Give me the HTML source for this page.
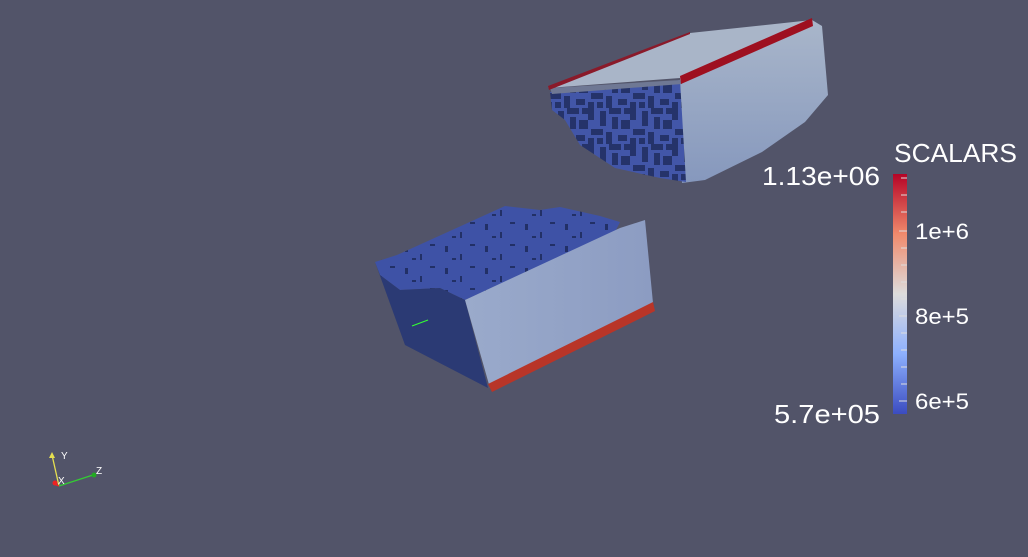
<!DOCTYPE html>
<html><head><meta charset="utf-8"><style>
html,body{margin:0;padding:0;background:#525469;width:1028px;height:557px;overflow:hidden}
svg{display:block}
text{font-family:"Liberation Sans",sans-serif;fill:#fff}
</style></head><body>
<svg width="1028" height="557" viewBox="0 0 1028 557">
<defs>
<linearGradient id="cb" x1="0" y1="0" x2="0" y2="1">
<stop offset="0" stop-color="#b40426"/><stop offset="0.25" stop-color="#f08a6c"/>
<stop offset="0.5" stop-color="#dddcdc"/><stop offset="0.75" stop-color="#8db0fe"/>
<stop offset="1" stop-color="#3b4cc0"/></linearGradient>
<linearGradient id="rf" x1="0" y1="0" x2="0" y2="1">
<stop offset="0" stop-color="#a9b6ca"/><stop offset="1" stop-color="#8698bd"/></linearGradient>
<linearGradient id="ff" x1="0" y1="0" x2="1" y2="0">
<stop offset="0" stop-color="#9aaacb"/><stop offset="1" stop-color="#8c9cc2"/></linearGradient>
<pattern id="nz" width="42" height="36" patternUnits="userSpaceOnUse">
<rect width="42" height="36" fill="#4256a8"/>
<rect x="0" y="0" width="6" height="12" fill="#25336a"/>
<rect x="12" y="3" width="6" height="15" fill="#25336a"/>
<rect x="21" y="0" width="12" height="6" fill="#25336a"/>
<rect x="24" y="9" width="6" height="12" fill="#25336a"/>
<rect x="33" y="12" width="9" height="9" fill="#25336a"/>
<rect x="3" y="21" width="12" height="6" fill="#25336a"/>
<rect x="0" y="30" width="6" height="6" fill="#25336a"/>
<rect x="18" y="24" width="6" height="12" fill="#25336a"/>
<rect x="30" y="27" width="9" height="6" fill="#25336a"/>
<rect x="36" y="0" width="6" height="6" fill="#25336a"/>
<rect x="9" y="30" width="6" height="6" fill="#25336a"/>
</pattern>
<pattern id="nz2" width="40" height="22" patternUnits="userSpaceOnUse">
<rect width="40" height="22" fill="#3e52a6"/>
<rect x="5" y="4" width="3" height="6" fill="#223066"/>
<rect x="20" y="12" width="2" height="6" fill="#223066"/>
<rect x="30" y="2" width="5" height="2" fill="#223066"/>
<rect x="12" y="16" width="4" height="2" fill="#223066"/>
</pattern>
</defs>

<!-- top object -->
<polygon points="548,88 690,33 812,20 680,78" fill="#a9b5c8"/>
<polygon points="680,78 812,20 822,26 828,95 805,122 762,152 705,180 682,183" fill="url(#rf)"/>
<polygon points="550,92 680,80 686,182 660,178 615,168 580,145 565,120 552,110" fill="url(#nz)"/>
<polygon points="550,88 680,80 682,84 552,94" fill="#6f7894"/>
<polygon points="680,76 812,18 813,26 681,84" fill="#9e1020"/>
<polygon points="548,86 690,32 690,34 549,90" fill="#8a1a2a"/>

<!-- bottom object -->
<polygon points="375,262 397,255 505,206 540,210 560,207 600,216 620,222 615,232 465,300 440,288 400,290 380,275" fill="url(#nz2)"/>
<polygon points="375,262 380,275 400,290 440,288 465,300 488,388 405,345" fill="#2b3a74"/>
<polygon points="465,300 620,228 645,220 653,303 490,388" fill="url(#ff)"/>
<polygon points="488,384 653,302 655,311 492,392" fill="#b83528"/>
<line x1="412" y1="326" x2="428" y2="320" stroke="#3f3" stroke-width="1.2"/>

<!-- axes -->
<line x1="59" y1="486" x2="52" y2="455" stroke="#e6e050" stroke-width="1.3"/>
<polygon points="49,458 55,458 52,452" fill="#e6e050"/>
<line x1="59" y1="486" x2="93" y2="475" stroke="#3c3" stroke-width="1.3"/>
<circle cx="94" cy="475" r="2.5" fill="#2a2"/>
<line x1="59" y1="486" x2="54" y2="484" stroke="#e22" stroke-width="1.3"/>
<circle cx="55" cy="483" r="2.5" fill="#e22"/>
<text x="61" y="459" font-size="10">Y</text>
<text x="96" y="474" font-size="10">Z</text>
<text x="58" y="484" font-size="10">X</text>

<!-- colorbar -->
<rect x="893" y="174" width="14" height="240" fill="url(#cb)"/>
<g stroke="#ddd" stroke-width="1">
<line x1="901" y1="178" x2="907" y2="178"/><line x1="901" y1="195" x2="907" y2="195"/>
<line x1="901" y1="212" x2="907" y2="212"/><line x1="899" y1="231" x2="907" y2="231"/>
<line x1="901" y1="248" x2="907" y2="248"/><line x1="901" y1="265" x2="907" y2="265"/>
<line x1="901" y1="282" x2="907" y2="282"/><line x1="901" y1="299" x2="907" y2="299"/>
<line x1="899" y1="316" x2="907" y2="316"/><line x1="901" y1="333" x2="907" y2="333"/>
<line x1="901" y1="350" x2="907" y2="350"/><line x1="901" y1="367" x2="907" y2="367"/>
<line x1="901" y1="384" x2="907" y2="384"/><line x1="899" y1="401" x2="907" y2="401"/>
</g>
<text x="894" y="162" font-size="26" textLength="123" lengthAdjust="spacingAndGlyphs">SCALARS</text>
<text x="762" y="185" font-size="26" textLength="118" lengthAdjust="spacingAndGlyphs">1.13e+06</text>
<text x="774" y="423" font-size="26" textLength="106" lengthAdjust="spacingAndGlyphs">5.7e+05</text>
<text x="915" y="239" font-size="22" textLength="54" lengthAdjust="spacingAndGlyphs">1e+6</text>
<text x="915" y="324" font-size="22" textLength="54" lengthAdjust="spacingAndGlyphs">8e+5</text>
<text x="915" y="409" font-size="22" textLength="54" lengthAdjust="spacingAndGlyphs">6e+5</text>
</svg>
</body></html>
